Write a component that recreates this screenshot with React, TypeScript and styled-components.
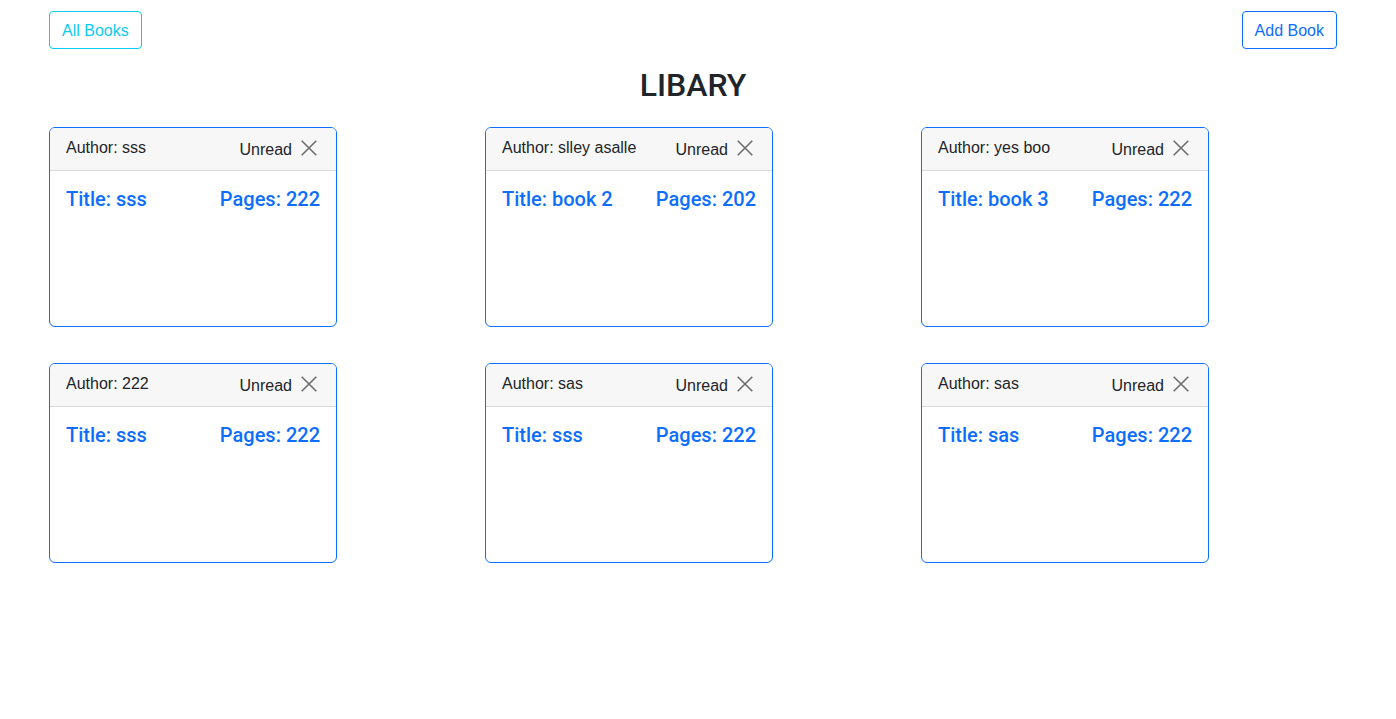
import React from "react";
import styled, { createGlobalStyle } from "styled-components";

const Global = createGlobalStyle`
  html, body { margin: 0; padding: 0; background: #fff; }
  body {
    font-family: "Liberation Sans", Arial, sans-serif;
    color: #212529;
    font-size: 16px;
    line-height: 1.5;
  }
  * { box-sizing: border-box; }
`;

const Page = styled.div`
  width: 1288px;
  margin-left: 49px;
  padding-top: 11px;
`;

const TopBar = styled.div`
  display: flex;
  justify-content: space-between;
  align-items: center;
`;

const OutlineButton = styled.button<{ $tone: string }>`
  font-family: inherit;
  font-size: 16px;
  line-height: 24px;
  padding: 7px 12px 5px;
  height: 38px;
  background: transparent;
  border: 1px solid ${(p) => p.$tone};
  color: ${(p) => p.$tone};
  border-radius: 4px;
  cursor: pointer;
`;

const Heading = styled.h2`
  margin: 17px 0 23px;
  text-align: center;
  font-family: Roboto, "Liberation Sans", sans-serif;
  font-size: 32px;
  font-weight: 500;
  line-height: 38px;
`;

const Grid = styled.div`
  display: grid;
  grid-template-columns: repeat(3, 436px);
  row-gap: 36px;
`;

const Card = styled.div`
  width: 288px;
  height: 200px;
  border: 1px solid #0d6efd;
  border-radius: 6px;
  overflow: hidden;
  display: flex;
  flex-direction: column;
`;

const CardHeader = styled.div`
  display: flex;
  justify-content: space-between;
  align-items: center;
  padding: 8px 18px 8px 16px;
  height: 43px;
  background: #f7f7f7;
  border-bottom: 1px solid #d9d9d9;
`;

const Author = styled.span`
  font-size: 16px;
  margin-top: -2px;
`;

const Status = styled.div`
  display: flex;
  align-items: center;
  gap: 8px;
  font-size: 16px;
  margin-top: 1px;
`;

const CloseIcon = styled.svg`
  width: 18px;
  height: 18px;
  margin-top: -4px;
`;

const CardBody = styled.div`
  display: flex;
  justify-content: space-between;
  padding: 16px 16px;
  color: #0d6efd;
  font-family: Roboto, "Liberation Sans", sans-serif;
  font-size: 20px;
  font-weight: 500;
  line-height: 24px;
`;

const books = [
  { author: "sss", title: "sss", pages: 222 },
  { author: "slley asalle", title: "book 2", pages: 202 },
  { author: "yes boo", title: "book 3", pages: 222 },
  { author: "222", title: "sss", pages: 222 },
  { author: "sas", title: "sss", pages: 222 },
  { author: "sas", title: "sas", pages: 222 },
];

export default function App() {
  return (
    <>
      <Global />
      <Page>
        <TopBar>
          <OutlineButton $tone="#0dcaf0">All Books</OutlineButton>
          <OutlineButton $tone="#0d6efd">Add Book</OutlineButton>
        </TopBar>
        <Heading>LIBARY</Heading>
        <Grid>
          {books.map((b, i) => (
            <Card key={i}>
              <CardHeader>
                <Author>Author: {b.author}</Author>
                <Status>
                  Unread
                  <CloseIcon viewBox="0 0 16 16">
                    <path d="M1.5 1.5 L14.5 14.5 M14.5 1.5 L1.5 14.5" stroke="#6c6c6c" strokeWidth="1.4" fill="none" />
                  </CloseIcon>
                </Status>
              </CardHeader>
              <CardBody>
                <span>Title: {b.title}</span>
                <span>Pages: {b.pages}</span>
              </CardBody>
            </Card>
          ))}
        </Grid>
      </Page>
    </>
  );
}
